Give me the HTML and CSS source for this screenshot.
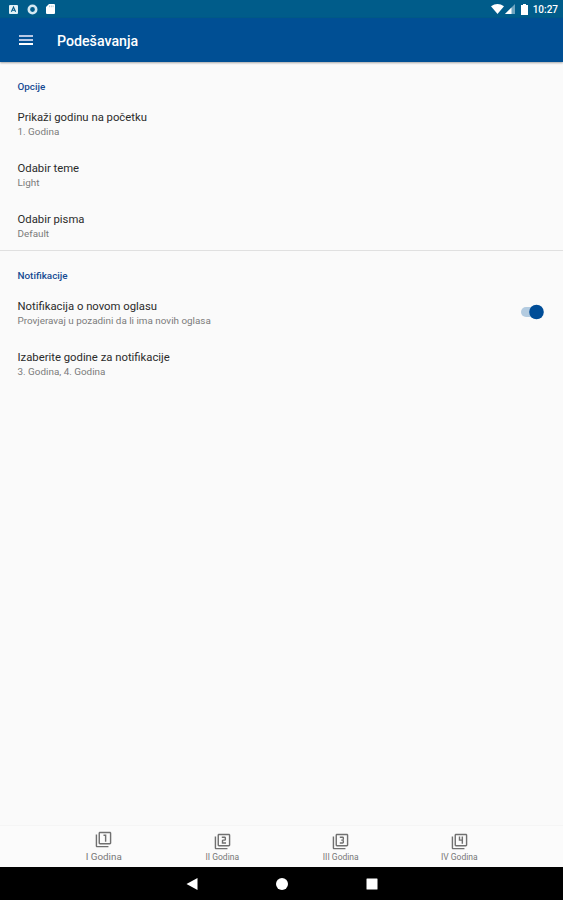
FILE: index.html
```
<!DOCTYPE html>
<html lang="sr-Latn">
<head>
    <meta charset="UTF-8">
    <meta name="viewport" content="width=device-width, initial-scale=1.0">
    <title>Podešavanja</title>
    <link rel="stylesheet" href="styles.css">
</head>
<body>

<!-- Status bar -->
<div class="status-bar">
    <div class="status-left">
        <svg width="9" height="9" viewBox="0 0 9 9"><rect width="9" height="9" rx="1" fill="#e3f2f6"/><path d="M2.4 6.8L4.5 2l2.1 4.8M3.2 5.3h2.6" fill="none" stroke="#005a87" stroke-width="1.1"/></svg>
        <svg width="11" height="11" viewBox="0 0 11 11"><circle cx="5.5" cy="5.5" r="3.7" fill="none" stroke="#d5e9f2" stroke-width="2.6"/></svg>
        <svg width="9" height="10" viewBox="0 0 9 10"><path d="M3 0h5q1 0 1 1v8q0 1-1 1H1q-1 0-1-1V3z" fill="#fff"/><path d="M3.5 1.5v1.7M5.3 1.5v1.7M7.1 1.5v1.7" stroke="#8db9cd" stroke-width=".7"/></svg>
    </div>
    <div class="status-right">
        <svg width="13" height="10" viewBox="0 0 13 10"><path d="M0 2.3Q6.5-2.3 13 2.3L6.5 10z" fill="#fff"/></svg>
        <svg class="signal" width="10" height="10" viewBox="0 0 10 10"><path d="M10 0v10H0z" fill="#6fa5c0"/><path d="M6.5 3.5V10H0z" fill="#fff"/></svg>
        <svg class="battery" width="7" height="11" viewBox="0 0 7 11"><path d="M2 0h3v1h2v10H0V1h2z" fill="#fff"/></svg>
        <span class="clock">10:27</span>
    </div>
</div>

<!-- App bar -->
<header class="app-bar">
    <svg class="menu-icon" width="14" height="11" viewBox="0 0 14 11"><path d="M0 0h14v2H0zM0 4h14v2H0z" fill="#b7c7e4"/><path d="M0 8h14v2H0z" fill="#fff"/></svg>
    <h1>Podešavanja</h1>
</header>

<main class="settings">
    <section class="group">
        <h2>Opcije</h2>
        <div class="item">
            <div class="title">Prikaži godinu na početku</div>
            <div class="summary">1. Godina</div>
        </div>
        <div class="item">
            <div class="title">Odabir teme</div>
            <div class="summary">Light</div>
        </div>
        <div class="item">
            <div class="title">Odabir pisma</div>
            <div class="summary">Default</div>
        </div>
    </section>

    <section class="group">
        <h2>Notifikacije</h2>
        <div class="item with-switch">
            <div>
                <div class="title">Notifikacija o novom oglasu</div>
                <div class="summary">Provjeravaj u pozadini da li ima novih oglasa</div>
            </div>
            <svg class="switch" width="24" height="16" viewBox="0 0 24 16"><rect x="1" y="3" width="20" height="10" rx="5" fill="#b3cbe0"/><circle cx="16.5" cy="8" r="7.3" fill="#004d97"/></svg>
        </div>
        <div class="item">
            <div class="title">Izaberite godine za notifikacije</div>
            <div class="summary">3. Godina, 4. Godina</div>
        </div>
    </section>
</main>

<!-- Bottom navigation -->
<nav class="bottom-nav">
    <div class="tab active">
        <svg viewBox="0 0 24 24"><path d="M3 5H1v16c0 1.1.9 2 2 2h16v-2H3V5zm11 10h2V5h-4v2h2v8zm7-14H7c-1.1 0-2 .9-2 2v14c0 1.1.9 2 2 2h14c1.1 0 2-.9 2-2V3c0-1.1-.9-2-2-2zm0 16H7V3h14v14z"/></svg>
        <span>I Godina</span>
    </div>
    <div class="tab">
        <svg viewBox="0 0 24 24"><path d="M3 5H1v16c0 1.1.9 2 2 2h16v-2H3V5zm18-4H7c-1.1 0-2 .9-2 2v14c0 1.1.9 2 2 2h14c1.1 0 2-.9 2-2V3c0-1.1-.9-2-2-2zm0 16H7V3h14v14zm-4-4h-4v-2h2c1.1 0 2-.89 2-2V7c0-1.11-.9-2-2-2h-4v2h4v2h-2c-1.1 0-2 .89-2 2v4h6v-2z"/></svg>
        <span>II Godina</span>
    </div>
    <div class="tab">
        <svg viewBox="0 0 24 24"><path d="M21 1H7c-1.1 0-2 .9-2 2v14c0 1.1.9 2 2 2h14c1.1 0 2-.9 2-2V3c0-1.1-.9-2-2-2zm0 16H7V3h14v14zM3 5H1v16c0 1.1.9 2 2 2h16v-2H3V5zm14 8v-1.5c0-.83-.67-1.5-1.5-1.5.83 0 1.5-.67 1.5-1.5V7c0-1.11-.9-2-2-2h-4v2h4v2h-2v2h2v2h-4v2h4c1.1 0 2-.89 2-2z"/></svg>
        <span>III Godina</span>
    </div>
    <div class="tab">
        <svg viewBox="0 0 24 24"><path d="M3 5H1v16c0 1.1.9 2 2 2h16v-2H3V5zm12 10h2V5h-2v4h-2V5h-2v6h4v4zm6-14H7c-1.1 0-2 .9-2 2v14c0 1.1.9 2 2 2h14c1.1 0 2-.9 2-2V3c0-1.1-.9-2-2-2zm0 16H7V3h14v14z"/></svg>
        <span>IV Godina</span>
    </div>
</nav>

<!-- System buttons -->
<div class="system-bar">
    <svg width="12" height="12" viewBox="0 0 12 12"><path d="M11.5 0v12L.5 6z"/></svg>
    <svg width="12" height="12" viewBox="0 0 12 12"><circle cx="6" cy="6" r="6"/></svg>
    <svg width="12" height="12" viewBox="0 0 12 12"><rect x=".5" y=".5" width="11" height="11" rx=".5"/></svg>
</div>

</body>
</html>
```
FILE: styles.css
```
* {
    box-sizing: border-box;
}
body {
    margin: 0;
    height: 900px;
    display: flex;
    flex-direction: column;
    overflow: hidden;
    background: #fafafa;
    font-family: Roboto, sans-serif;
}
svg {
    display: block;
    flex: none;
}
h1, h2 {
    margin: 0;
}
.status-bar {
    height: 18px;
    padding: 0 5px 0 9px;
    display: flex;
    align-items: center;
    justify-content: space-between;
    background: #005c8a;
    color: #fff;
}
.status-left, .status-right {
    display: flex;
    align-items: center;
}
.status-left {
    gap: 8.5px;
}
.signal {
    margin-left: 1px;
}
.battery {
    margin-left: 6px;
}
.clock {
    margin-left: 5px;
    padding-top: 1px;
    font-size: 10px;
    font-weight: 500;
    line-height: 17px;
}

.app-bar {
    height: 44px;
    padding-left: 19px;
    display: flex;
    align-items: center;
    background: #004f94;
    color: #fff;
    box-shadow: 0 1px 2px rgba(0, 0, 0, 0.35);
}
.app-bar h1 {
    margin-left: 24px;
    padding-top: 2px;
    font-size: 14.2px;
    font-weight: 500;
    line-height: 20px;
}

.settings {
    flex: 1;
}
.group {
    height: 188px;
    padding: 18px 19px 0 17.5px;
}
.group + .group {
    border-top: 1px solid #e0e0e0;
}
.group h2 {
    height: 13px;
    color: #164a93;
    font-size: 9.9px;
    font-weight: 500;
    line-height: 13px;
}
.item {
    height: 51px;
    padding-top: 17px;
}
.title {
    color: #2b2b2b;
    font-size: 11.3px;
    line-height: 15px;
}
.summary {
    color: #7a7a7a;
    font-size: 9.88px;
    line-height: 14px;
}
.with-switch {
    display: flex;
    justify-content: space-between;
}
.switch {
    margin-top: 5px;
}

.bottom-nav {
    height: 42px;
    display: flex;
    justify-content: center;
    background: #fbfbfb;
    border-top: 1px solid #f5f5f5;
}
.tab {
    width: 118.5px;
    padding-top: 7px;
    display: flex;
    flex-direction: column;
    align-items: center;
    color: #777;
    font-size: 8.5px;
    line-height: 12px;
}
.tab svg {
    width: 17px;
    height: 17px;
    fill: #707070;
}
.tab span {
    margin-top: 1px;
}
.tab.active {
    padding-top: 5px;
    font-size: 9.8px;
}
.tab.active span {
    margin-top: 3px;
}

.system-bar {
    height: 33px;
    display: flex;
    align-items: center;
    justify-content: center;
    gap: 78px;
    background: #000;
    fill: #fff;
}
```
